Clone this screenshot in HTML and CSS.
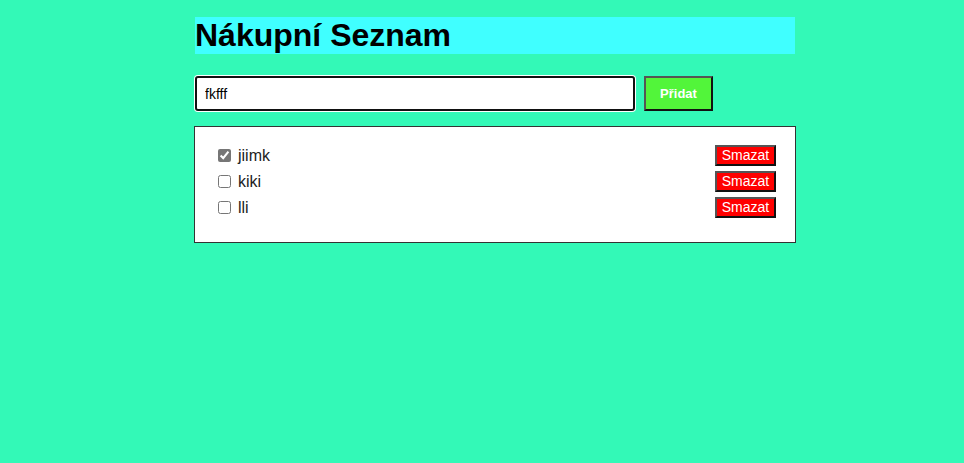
FILE: index.html
```html
<!DOCTYPE html>
<html lang="cs">
<head>
<meta charset="utf-8">
<title>Nákupní Seznam</title>
<link rel="stylesheet" href="styles.css">
</head>
<body>
<div class="container">
  <h1 class="title">Nákupní Seznam</h1>
  <form class="add-form">
    <input class="add-input" type="text" value="fkfff">
    <button class="add-btn" type="button">Přidat</button>
  </form>
  <ul class="list">
    <li class="item">
      <label class="item-label"><input type="checkbox" class="check" checked> jiimk</label>
      <button class="del-btn" type="button">Smazat</button>
    </li>
    <li class="item">
      <label class="item-label"><input type="checkbox" class="check"> kiki</label>
      <button class="del-btn" type="button">Smazat</button>
    </li>
    <li class="item">
      <label class="item-label"><input type="checkbox" class="check"> lli</label>
      <button class="del-btn" type="button">Smazat</button>
    </li>
  </ul>
</div>
</body>
</html>
```
FILE: styles.css
```css
html, body {
  margin: 0;
  padding: 0;
}
body {
  background: #33f9b7;
  font-family: "Liberation Sans", Arial, sans-serif;
  padding-left: 26px;
}
.container {
  width: 600px;
  margin: 0 auto;
  padding-top: 17px;
}
.title {
  margin: 0;
  background: #40ffff;
  font-size: 32px;
  font-weight: bold;
  line-height: 37px;
  height: 37px;
  color: #000;
}
.add-form {
  display: flex;
  gap: 9px;
  margin-top: 22px;
}
.add-input {
  box-sizing: border-box;
  width: 440px;
  height: 35px;
  border: 2px solid #111;
  border-radius: 3px;
  box-shadow: 0 0 0 1px #fff;
  padding: 0 8px;
  font-family: "Liberation Sans", Arial, sans-serif;
  font-size: 14px;
  color: #000;
  outline: none;
  background: #fff;
}
.add-btn {
  box-sizing: border-box;
  width: 69px;
  height: 35px;
  background: #52f53a;
  color: #fff;
  font-family: "Liberation Sans", Arial, sans-serif;
  font-weight: bold;
  font-size: 13px;
  border: 2px solid;
  border-color: #555 #111 #111 #555;
  padding: 0;
}
.list {
  list-style: none;
  margin: 15px 0 0 -1px;
  background: #fff;
  border: 1px solid #333;
  padding: 18px 19px 24px 19px;
  box-sizing: content-box;
  width: 562px;
  display: flex;
  flex-direction: column;
  gap: 5px;
}
.item {
  display: flex;
  justify-content: space-between;
  align-items: center;
  height: 21px;
}
.item-label {
  font-size: 16px;
  color: #222;
  display: flex;
  align-items: center;
}
.check {
  margin: 0 7px 0 4px;
  width: 13px;
  height: 13px;
  accent-color: #767676;
}
.del-btn {
  box-sizing: border-box;
  width: 61px;
  height: 21px;
  background: #ff0000;
  color: #fff;
  font-family: "Liberation Sans", Arial, sans-serif;
  font-size: 14px;
  border: 2px solid;
  border-color: #555 #111 #111 #555;
  padding: 0;
  line-height: 17px;
}
```
